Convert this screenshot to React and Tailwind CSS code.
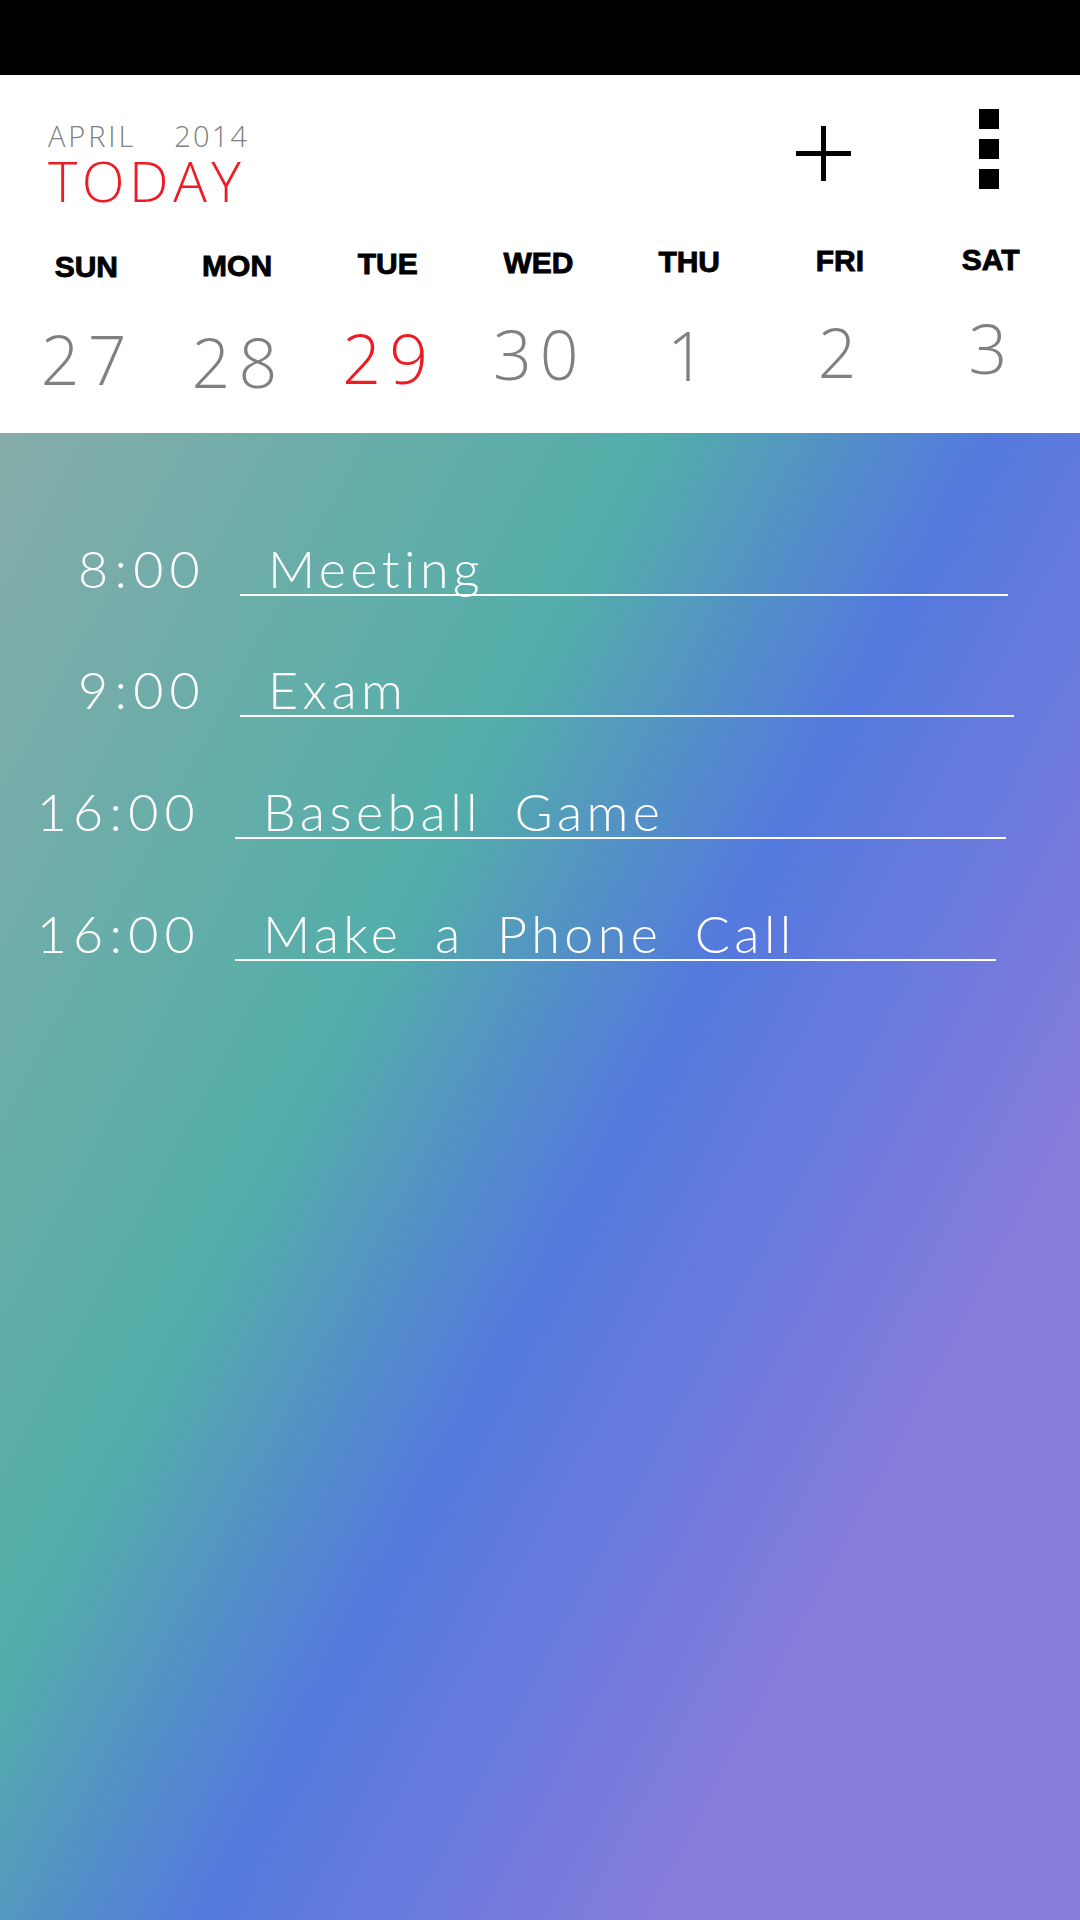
import React from "react";

const days = [
  { d: "SUN", n: "27", lab: "mt-[7px]", num: "mt-[43px]", red: false },
  { d: "MON", n: "28", lab: "mt-[6px]", num: "mt-[47px]", red: false },
  { d: "TUE", n: "29", lab: "mt-[4px]", num: "mt-[45px]", red: true },
  { d: "WED", n: "30", lab: "mt-[3px]", num: "mt-[42px]", red: false },
  { d: "THU", n: "1", lab: "mt-[2px]", num: "mt-[44px]", red: false },
  { d: "FRI", n: "2", lab: "mt-[1px]", num: "mt-[42px]", red: false },
  { d: "SAT", n: "3", lab: "mt-[0px]", num: "mt-[39px]", red: false },
];

const events = [
  { t: "8:00", title: "Meeting", row: "mt-[109px] pl-[5px]", w: "w-[768px]" },
  { t: "9:00", title: "Exam", row: "mt-[67px] pl-[5px]", w: "w-[774px]" },
  { t: "16:00", title: "Baseball Game", row: "mt-[68px] pl-[0px]", w: "w-[771px]" },
  { t: "16:00", title: "Make a Phone Call", row: "mt-[68px] pl-[0px]", w: "w-[761px]" },
];

export default function App() {
  return (
    <div className="min-h-screen w-[1080px] flex flex-col bg-white">
      <div className="h-[75px] bg-black shrink-0" />
      <div className="h-[358px] shrink-0 bg-white flex flex-col">
        <div className="flex items-start justify-between">
          <div className="pl-[48px] pt-[46px] flex flex-col font-['Open_Sans',sans-serif] font-light">
            <div className="flex text-[29px] leading-[30px] text-[#808080] tracking-[0.1em]">
              <span>APRIL</span>
              <span className="ml-[38px] tracking-[0.075em]">2014</span>
            </div>
            <div className="mt-[1px] text-[56px] leading-none text-[#ed1c24] tracking-[0.08em]">
              TODAY
            </div>
          </div>
          <div className="flex items-start gap-[128px] pr-[81px]">
            <svg className="mt-[51px]" width="55" height="55" viewBox="0 0 55 55">
              <rect x="0" y="25" width="55" height="5" fill="#000" />
              <rect x="25" y="0" width="5" height="55" fill="#000" />
            </svg>
            <div className="mt-[34px] flex flex-col gap-[10px]">
              <div className="w-[20px] h-[20px] bg-black" />
              <div className="w-[20px] h-[20px] bg-black" />
              <div className="w-[20px] h-[20px] bg-black" />
            </div>
          </div>
        </div>
        <div className="mt-[37px] grid grid-cols-7 pl-[11px] pr-[14px]">
          {days.map((x) => (
            <div key={x.d} className="flex flex-col items-center">
              <div
                className={`${x.lab} font-['Liberation_Sans',Arial,sans-serif] font-bold text-[30px] leading-none text-black [-webkit-text-stroke:0.9px_#000]`}
              >
                {x.d}
              </div>
              <div
                className={`${x.num} pl-[0.04em] font-['Open_Sans',sans-serif] font-light text-[68px] leading-none tracking-[0.12em] ${
                  x.red ? "text-[#ed1c24]" : "text-[#808080]"
                }`}
              >
                {x.n}
              </div>
            </div>
          ))}
        </div>
      </div>
      <div className="flex-1 bg-[linear-gradient(118deg,#86aca9_0%,#53aea9_35%,#5479de_53%,#877cdc_78%,#877cdc_100%)] flex flex-col font-['Lato',sans-serif] font-light text-white">
        {events.map((e, i) => (
          <div key={i} className={`${e.row} flex items-baseline`}>
            <div className="w-[201px] text-right text-[52px] leading-none tracking-[0.12em]">
              {e.t}
            </div>
            <div
              className={`ml-[34px] ${e.w} border-b-2 border-white pl-[28px] text-[52px] leading-none tracking-[0.085em] [word-spacing:14px] whitespace-nowrap`}
            >
              {e.title}
            </div>
          </div>
        ))}
      </div>
    </div>
  );
}
